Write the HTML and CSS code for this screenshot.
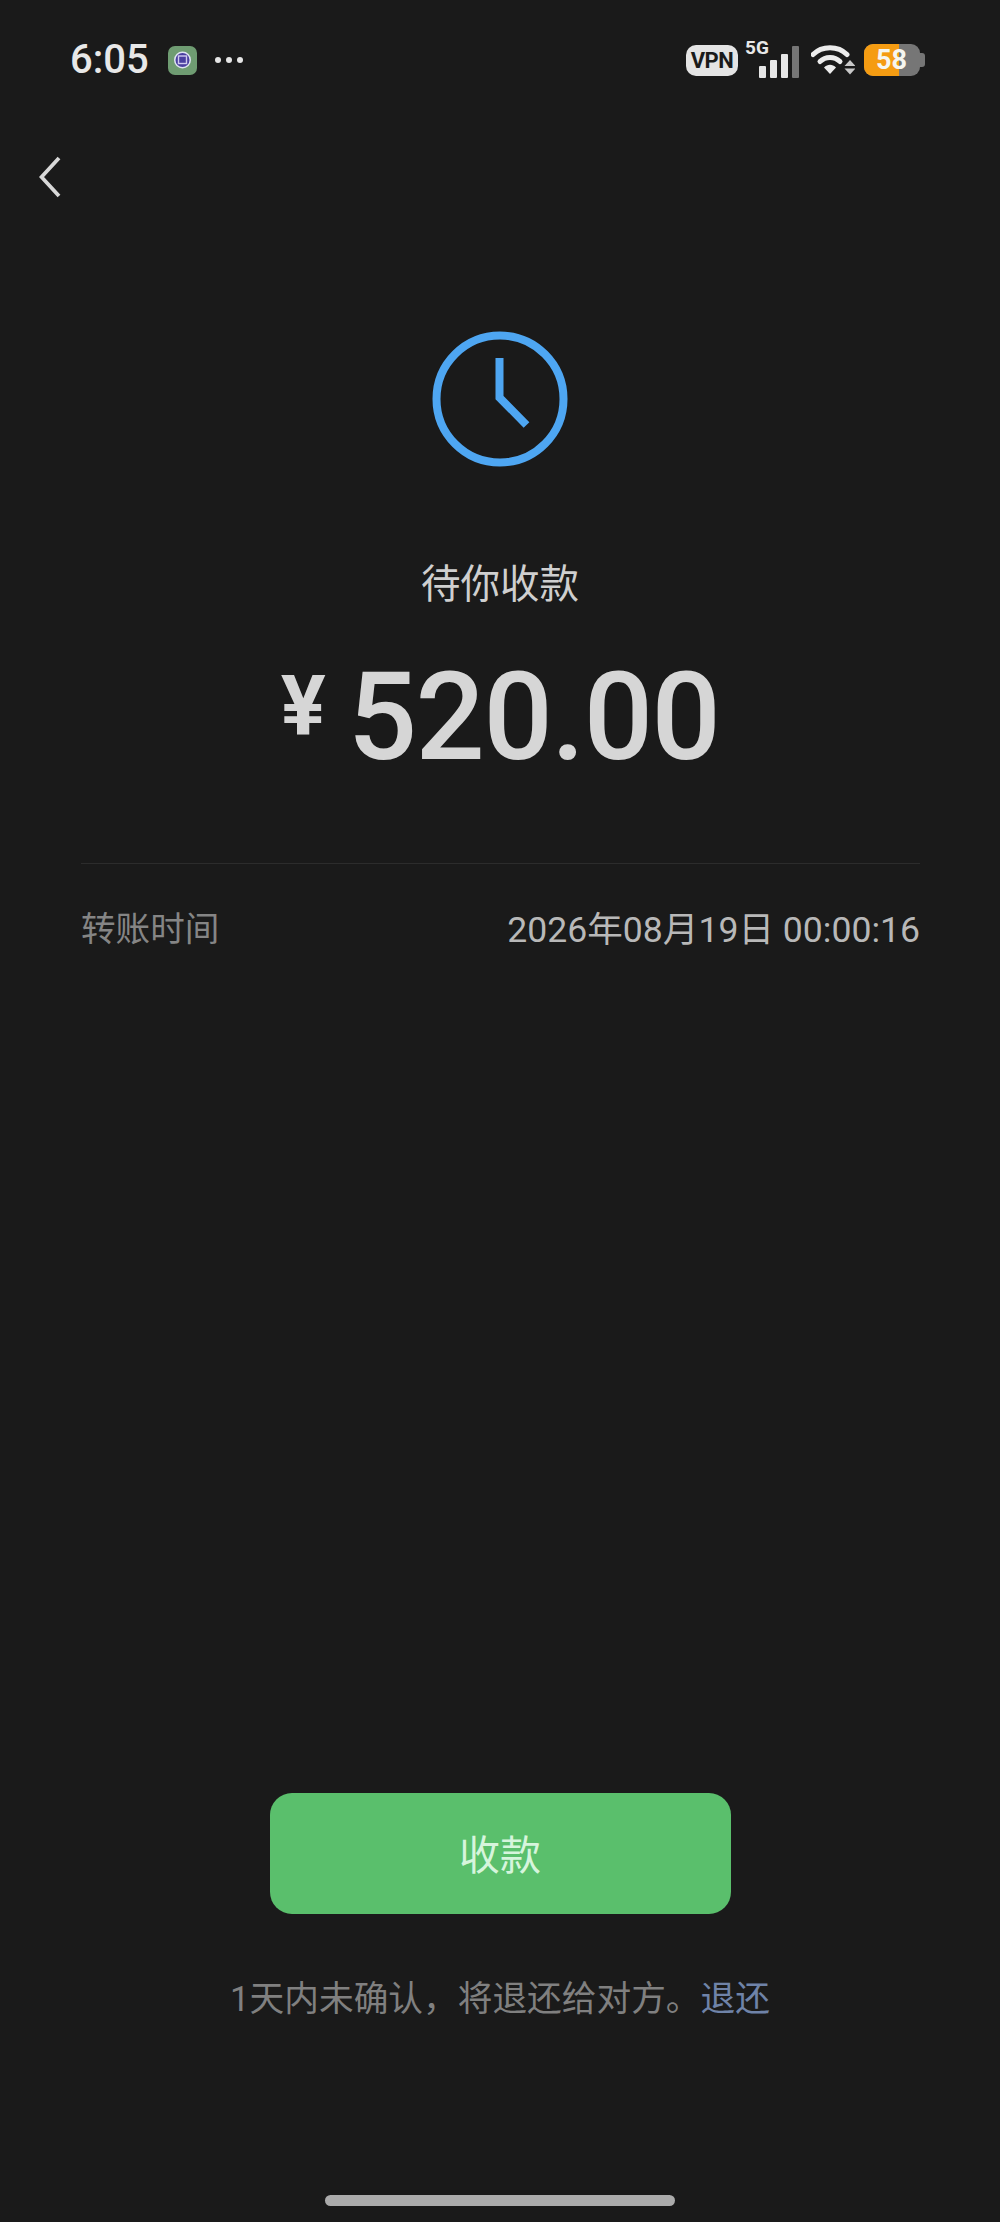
FILE: index.html
```html
<!DOCTYPE html>
<html lang="zh-CN">
<head>
    <meta charset="UTF-8">
    <meta name="viewport" content="width=device-width, initial-scale=1.0">
    <title>待你收款</title>
    <link rel="stylesheet" href="styles.css">
</head>
<body>

<!-- Status bar -->
<header class="status-bar">
    <div class="status-left">
        <span class="clock-time">6:05</span>
        <svg class="app-badge" width="29" height="29" viewBox="0 0 29 29">
            <rect width="29" height="29" rx="7" fill="#6f9c72"/>
            <circle cx="14.5" cy="14" r="8.5" fill="#dfe3f2"/>
            <circle cx="14.5" cy="14" r="7" fill="#4a3fa0"/>
            <rect x="10.5" y="10" width="8" height="7.5" fill="none" stroke="#cfc9ee" stroke-width="1.4"/>
        </svg>
        <div class="more-dots"><i></i><i></i><i></i></div>
    </div>
    <div class="status-right">
        <span class="vpn-pill">VPN</span>
        <div class="signal">
            <span class="signal-label">5G</span>
            <svg class="signal-bars" width="40" height="32" viewBox="0 0 40 32">
                <rect x="0" y="20" width="7" height="12" rx="1" fill="#e6e6e6"/>
                <rect x="11" y="14" width="7" height="18" rx="1" fill="#e6e6e6"/>
                <rect x="22" y="8" width="7" height="24" rx="1" fill="#e6e6e6"/>
                <rect x="33" y="0" width="7" height="32" rx="1" fill="#767676"/>
            </svg>
        </div>
        <svg class="wifi" width="44" height="30" viewBox="0 0 44 30">
            <path d="M2 9.5C11 0.5 27 0.5 36 9.5" fill="none" stroke="#ececec" stroke-width="5" stroke-linecap="round"/>
            <path d="M9 16.5C14.5 11 23.5 11 29 16.5" fill="none" stroke="#ececec" stroke-width="5" stroke-linecap="round"/>
            <path d="M13 22.5C16.5 18.8 21.5 18.8 25 22.5L19 29Z" fill="#ececec"/>
            <path d="M39 15L44.5 21H33.5Z" fill="#c9c9c9"/>
            <path d="M33.5 23.5H44.5L39 29.5Z" fill="#c9c9c9"/>
        </svg>
        <div class="battery">
            <div class="battery-body">
                <div class="battery-level"></div>
                <span class="battery-text">58</span>
            </div>
            <div class="battery-nub"></div>
        </div>
    </div>
</header>

<!-- Back arrow -->
<nav class="top-nav">
    <svg width="22" height="42" viewBox="0 0 22 42">
        <path d="M20 2L2.5 21L20 40" fill="none" stroke="#d8d8d8" stroke-width="3.8"/>
    </svg>
</nav>

<!-- Transfer info -->
<section class="transfer">
    <svg class="clock-icon" width="136" height="136" viewBox="0 0 136 136">
        <circle cx="68" cy="68" r="63.5" fill="none" stroke="#4ea6f2" stroke-width="8"/>
        <path d="M67.5 27V66.5L94.5 94" fill="none" stroke="#4ea6f2" stroke-width="8"/>
    </svg>
    <h1 class="transfer-status">待你收款</h1>
    <div class="amount">
        <span class="currency">¥</span>
        <span class="value">520.00</span>
    </div>
</section>

<div class="details">
    <div class="detail-row">
        <span class="detail-label">转账时间</span>
        <span class="detail-value">2026年08月19日 00:00:16</span>
    </div>
</div>

<!-- Accept button and note -->
<footer class="actions">
    <button type="button" class="accept-btn">收款</button>
    <p class="note">1天内未确认，将退还给对方。<a href="#" class="note-link">退还</a></p>
    <div class="home-bar"></div>
</footer>

</body>
</html>
```

FILE: styles.css
```css
html, body {
    height: 100%;
}

body {
    margin: 0;
    background-color: #1a1a1a;
    color: #d6d6d6;
    font-family: Roboto, 'Noto Sans CJK SC', sans-serif;
    display: flex;
    flex-direction: column;
    overflow: hidden;
}

/* Status bar */
.status-bar {
    display: flex;
    justify-content: space-between;
    align-items: center;
    height: 40px;
    margin-top: 40px;
    padding: 0 75px 0 70px;
}

.status-left,
.status-right {
    display: flex;
    align-items: center;
}

.clock-time {
    font-size: 40px;
    font-weight: 500;
    color: #e8e8e8;
    line-height: 40px;
}

.app-badge {
    margin-left: 19px;
}

.more-dots {
    display: flex;
    gap: 5px;
    margin-left: 18px;
}

.more-dots i {
    width: 6px;
    height: 6px;
    border-radius: 50%;
    background-color: #e6e6e6;
}

.vpn-pill {
    width: 52px;
    height: 31px;
    border-radius: 10px;
    background-color: #e4e4e4;
    color: #1a1a1a;
    font-size: 22px;
    font-weight: 700;
    line-height: 31px;
    text-align: center;
    letter-spacing: -0.5px;
}

.signal {
    position: relative;
    width: 54px;
    height: 36px;
    margin-left: 7px;
}

.signal-label {
    position: absolute;
    left: 0;
    top: -4px;
    font-size: 19px;
    font-weight: 700;
    line-height: 20px;
    color: #e8e8e8;
}

.signal-bars {
    position: absolute;
    left: 14px;
    top: 4px;
}

.wifi {
    margin-left: 12px;
}

.battery {
    display: flex;
    align-items: center;
    margin-left: 9px;
}

.battery-body {
    position: relative;
    width: 56px;
    height: 32px;
    border-radius: 9px;
    background-color: #767676;
    overflow: hidden;
}

.battery-level {
    width: 35px;
    height: 100%;
    background-color: #f59c12;
}

.battery-text {
    position: absolute;
    left: 12px;
    top: 0;
    font-size: 27px;
    font-weight: 700;
    line-height: 32px;
    color: #f6f6f0;
}

.battery-nub {
    width: 5px;
    height: 14px;
    border-radius: 0 3px 3px 0;
    background-color: #767676;
}

/* Back arrow */
.top-nav {
    padding: 76px 0 0 39px;
    line-height: 0;
}

/* Transfer info */
.transfer {
    display: flex;
    flex-direction: column;
    align-items: center;
}

.clock-icon {
    margin-top: 133px;
}

.transfer-status {
    margin: 93px 0 0;
    font-size: 39.5px;
    font-weight: 400;
    line-height: 50px;
    color: #cfcfcf;
}

.amount {
    display: flex;
    align-items: center;
    margin-top: 48px;
    height: 120px;
}

.currency {
    font-size: 84px;
    font-weight: 700;
    line-height: 100px;
    margin-right: 22px;
    margin-top: -22px;
}

.value {
    font-size: 122px;
    font-weight: 500;
    line-height: 120px;
    letter-spacing: -1.5px;
}

.details {
    margin: 85px 80px 0 81px;
    border-top: 1px solid #2c2c2c;
}

.detail-row {
    display: flex;
    justify-content: space-between;
    align-items: center;
    height: 124px;
    font-size: 34.6px;
}

.detail-label {
    color: #858585;
}

.detail-value {
    color: #b8b8b8;
    font-size: 35.6px;
}

/* Accept button and note */
.actions {
    display: flex;
    flex-direction: column;
    align-items: center;
    margin-top: auto;
    padding-bottom: 16px;
}

.accept-btn {
    width: 461px;
    height: 121px;
    border: none;
    border-radius: 22px;
    background-color: #5abf6c;
    color: #d6f5dc;
    font-family: inherit;
    font-size: 41px;
    padding-bottom: 4px;
}

.note {
    margin: 60px 0 0;
    font-size: 34.7px;
    line-height: 50px;
    color: #808080;
}

.note-link {
    color: #6f83a8;
    text-decoration: none;
}

.home-bar {
    width: 350px;
    height: 11px;
    margin-top: 171px;
    border-radius: 6px;
    background-color: #ababab;
}
```
